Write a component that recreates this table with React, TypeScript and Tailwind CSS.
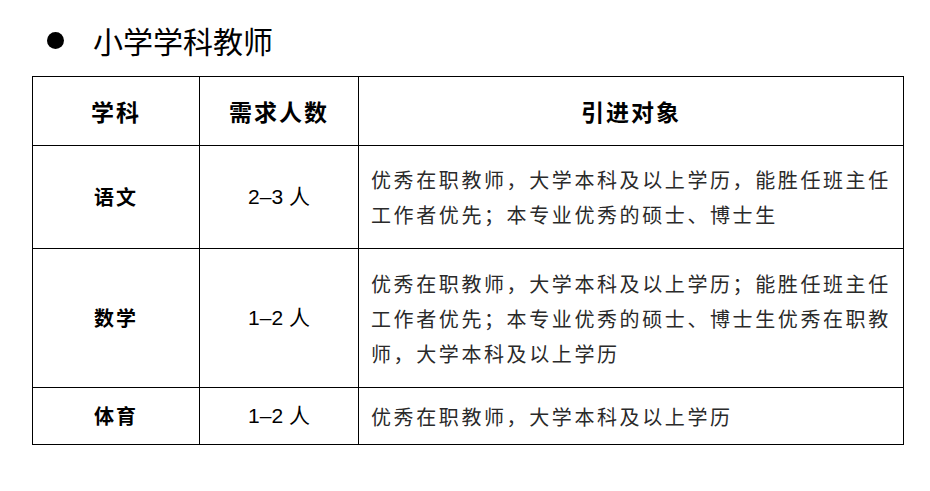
const rows = [
  {
    subject: '语文',
    count: '2–3 人',
    height: 'h-[103px]',
    lines: ['优秀在职教师，大学本科及以上学历，能胜任班主任', '工作者优先；本专业优秀的硕士、博士生'],
  },
  {
    subject: '数学',
    count: '1–2 人',
    height: 'h-[139px]',
    lines: [
      '优秀在职教师，大学本科及以上学历；能胜任班主任',
      '工作者优先；本专业优秀的硕士、博士生优秀在职教',
      '师，大学本科及以上学历',
    ],
  },
  {
    subject: '体育',
    count: '1–2 人',
    height: 'h-[57px]',
    lines: ['优秀在职教师，大学本科及以上学历'],
  },
];

const cjk = { fontFamily: '"Noto Sans CJK SC", "Liberation Sans", sans-serif' };

export default function App() {
  return (
    <div className="w-[930px] h-[491px] bg-white text-black" style={cjk}>
      {/* Section title */}
      <div className="h-[76px] pt-[4px] flex items-center">
        <span className="ml-[47px] w-[17px] h-[17px] rounded-full bg-black" />
        <h1 className="ml-[29px] text-[30px] leading-[32px] font-normal">小学学科教师</h1>
      </div>

      {/* Table */}
      <table className="ml-8 border-collapse">
        <thead>
          <tr className="h-[69px]">
            <th className="w-[167px] border border-black text-[23px] font-bold tracking-[2px] align-middle">学科</th>
            <th className="w-[159px] border border-black text-[23px] font-bold tracking-[2px] align-middle">需求人数</th>
            <th className="w-[545px] border border-black text-[23px] font-bold tracking-[2px] align-middle">引进对象</th>
          </tr>
        </thead>
        <tbody>
          {rows.map(r => (
            <tr key={r.subject} className={r.height}>
              <td className="border border-black text-center text-[20px] font-bold tracking-[2px] align-middle">{r.subject}</td>
              <td className="border border-black text-center text-[21px] align-middle" style={{ fontFamily: '"Liberation Sans", "Noto Sans CJK SC", sans-serif' }}>
                {r.count}
              </td>
              <td className="border border-black pl-[12px] align-middle text-[20px] leading-[35px] tracking-[2.6px] text-[#2a2a2a]">
                {r.lines.map((l, i) => (
                  <span key={i} className="block whitespace-nowrap">{l}</span>
                ))}
              </td>
            </tr>
          ))}
        </tbody>
      </table>
    </div>
  );
}
